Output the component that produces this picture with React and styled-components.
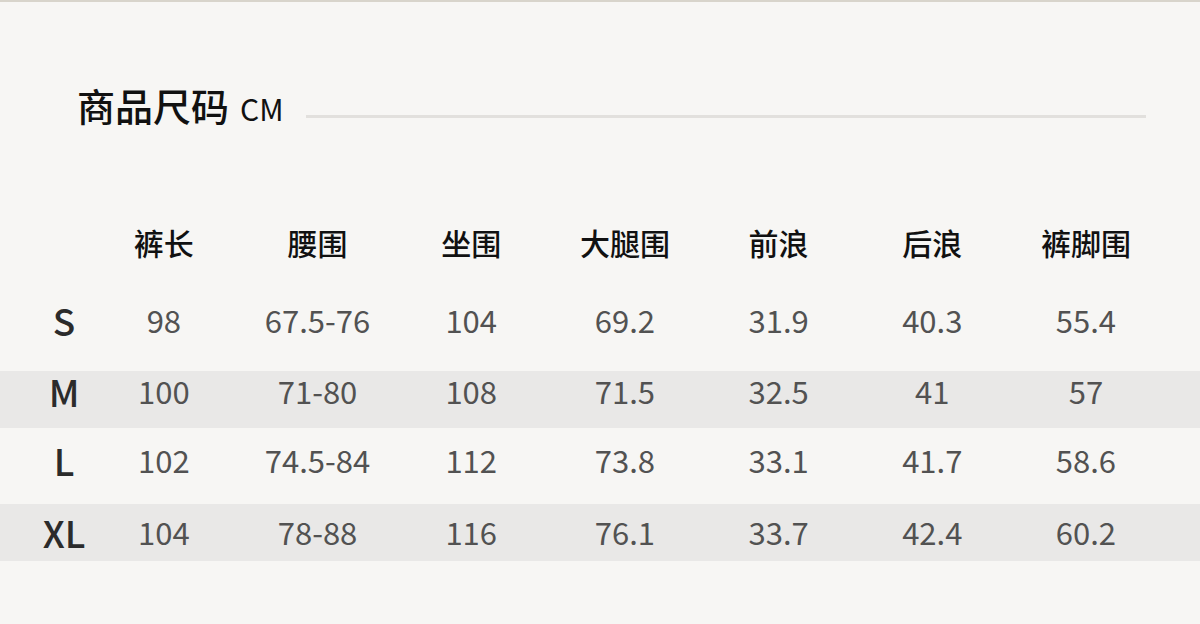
import styled, { createGlobalStyle } from "styled-components";

const GlobalStyle = createGlobalStyle`
  html, body {
    margin: 0;
    padding: 0;
    background: #f7f6f4;
  }
  body {
    font-family: "Noto Sans CJK SC", "Noto Sans", sans-serif;
  }
`;

const Page = styled.div`
  width: 1200px;
  height: 624px;
  background: #f7f6f4;
  border-top: 2px solid #d8d4cb;
  box-sizing: border-box;
  overflow: hidden;
`;

const TitleBar = styled.div`
  display: flex;
  align-items: center;
  padding: 75px 54px 0 77px;
  height: 56px;
`;

const Title = styled.h1`
  margin: 0;
  font-size: 38px;
  font-weight: 500;
  color: #111;
  line-height: 1;
  white-space: nowrap;
`;

const Unit = styled.span`
  font-size: 30px;
  font-weight: 400;
  margin-left: 11px;
`;

const Rule = styled.div`
  flex: 1;
  height: 3px;
  background: #e2e0dd;
  margin-left: 22px;
  margin-top: 22px;
`;

const Table = styled.div`
  margin-top: 89px;
`;

const Row = styled.div`
  display: grid;
  grid-template-columns: 87px repeat(7, 153.7px);
  align-items: start;
  height: ${(p) => p.$h}px;
  padding-top: ${(p) => p.$pad}px;
  box-sizing: border-box;
  background: ${(p) => (p.$shade ? "#e9e8e7" : "transparent")};
`;

const HeadCell = styled.div`
  text-align: center;
  font-size: 30px;
  font-weight: 500;
  color: #111;
  line-height: 40px;
`;

const SizeCell = styled.div`
  padding-left: 41px;
  text-align: center;
  font-size: 37px;
  font-weight: 500;
  color: #2b2b2b;
  line-height: 40px;
`;

const Cell = styled.div`
  text-align: center;
  font-size: 31px;
  font-weight: 400;
  color: #525252;
  line-height: 40px;
`;

const headers = ["裤长", "腰围", "坐围", "大腿围", "前浪", "后浪", "裤脚围"];

const rows = [
  { size: "S", values: ["98", "67.5-76", "104", "69.2", "31.9", "40.3", "55.4"], h: 77, pad: 6 },
  { size: "M", values: ["100", "71-80", "108", "71.5", "32.5", "41", "57"], h: 57, pad: 0, shade: true },
  { size: "L", values: ["102", "74.5-84", "112", "73.8", "33.1", "41.7", "58.6"], h: 76, pad: 12 },
  { size: "XL", values: ["104", "78-88", "116", "76.1", "33.7", "42.4", "60.2"], h: 57, pad: 8, shade: true },
];

export default function App() {
  return (
    <Page>
      <GlobalStyle />
      <TitleBar>
        <Title>
          商品尺码<Unit>CM</Unit>
        </Title>
        <Rule />
      </TitleBar>
      <Table>
        <Row $h={72} $pad={0}>
          <div />
          {headers.map((h) => (
            <HeadCell key={h}>{h}</HeadCell>
          ))}
        </Row>
        {rows.map((r) => (
          <Row key={r.size} $h={r.h} $pad={r.pad} $shade={r.shade}>
            <SizeCell>{r.size}</SizeCell>
            {r.values.map((v, i) => (
              <Cell key={i}>{v}</Cell>
            ))}
          </Row>
        ))}
      </Table>
    </Page>
  );
}
